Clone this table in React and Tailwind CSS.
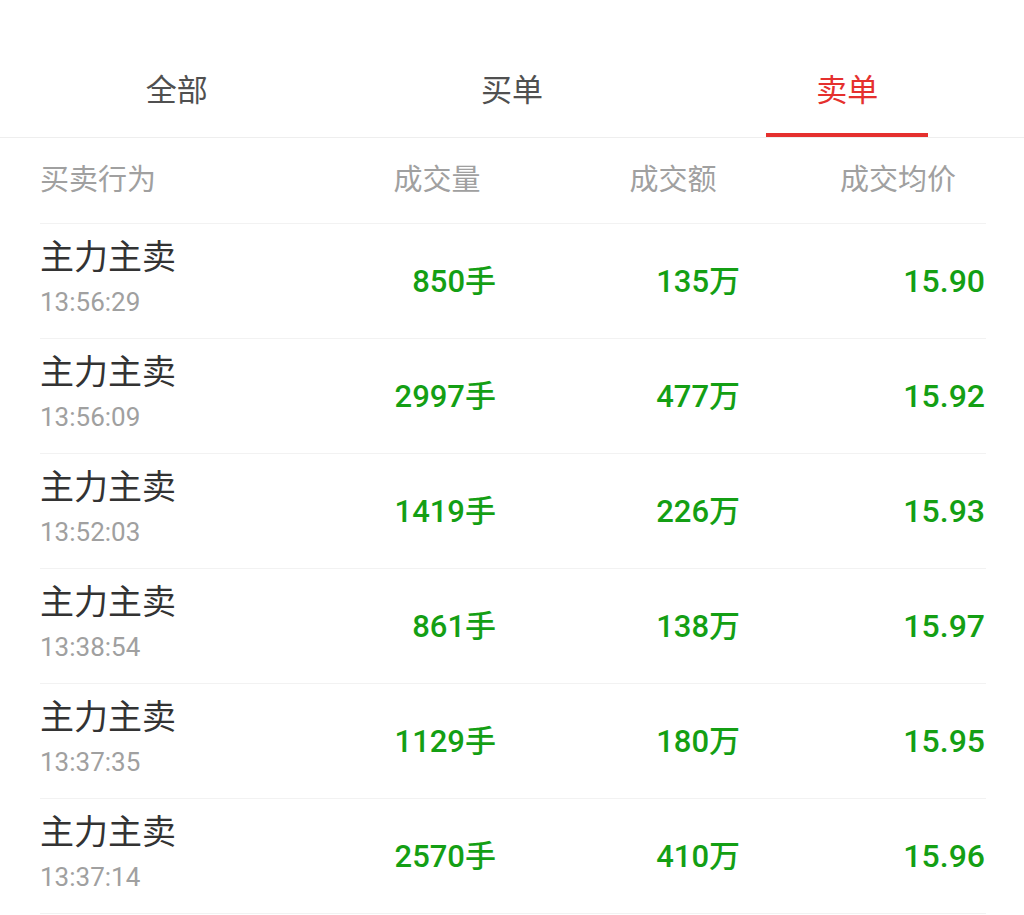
import React from "react";

const rows = [
  { t: "13:56:29", v: "850手", a: "135万", p: "15.90" },
  { t: "13:56:09", v: "2997手", a: "477万", p: "15.92" },
  { t: "13:52:03", v: "1419手", a: "226万", p: "15.93" },
  { t: "13:38:54", v: "861手", a: "138万", p: "15.97" },
  { t: "13:37:35", v: "1129手", a: "180万", p: "15.95" },
  { t: "13:37:14", v: "2570手", a: "410万", p: "15.96" },
];

const font = { fontFamily: 'Roboto, "Noto Sans CJK SC", sans-serif' };

export default function App() {
  return (
    <div className="w-[1024px] h-[915px] bg-white overflow-hidden" style={font}>
      <div className="grid grid-cols-3 px-[9px] border-b border-[#eeeeee]">
        {["全部", "买单", "卖单"].map((t, i) => (
          <div key={t} className="flex flex-col items-center pt-[75px]">
            <div
              className={
                "text-[31px] leading-[31px] " +
                (i === 2 ? "text-[#e5302e]" : "text-[#505050]")
              }
            >
              {t}
            </div>
            <div
              className={
                "mt-[27px] h-[4px] w-[162px] " + (i === 2 ? "bg-[#e5302e]" : "bg-transparent")
              }
            />
          </div>
        ))}
      </div>
      <div className="mx-[40px] w-[946px]">
        <div className="flex border-b border-[#f2f2f2] pt-[28px] pb-[28px] text-[29px] leading-[29px] text-[#a0a0a0]">
          <div className="w-[338px]">买卖行为</div>
          <div className="w-[118px] text-center">成交量</div>
          <div className="w-[134px] ml-[110px] text-center">成交额</div>
          <div className="w-[174px] ml-[71px] text-center">成交均价</div>
        </div>
        {rows.map((r, i) => (
          <div key={i} className="flex h-[115px] border-b border-[#f2f2f2]">
            <div className="w-[338px] pt-[16px]">
              <div className="text-[34px] leading-[34px] text-[#333333]">主力主卖</div>
              <div className="mt-[15px] text-[26px] leading-[26px] text-[#a0a0a0]">{r.t}</div>
            </div>
            <div className="w-[118px] flex items-center justify-end text-[31px] leading-[31px] font-medium text-[#149f14]">
              {r.v}
            </div>
            <div className="w-[134px] ml-[110px] flex items-center justify-end text-[31px] leading-[31px] font-medium text-[#149f14]">
              {r.a}
            </div>
            <div className="w-[174px] ml-[71px] flex items-center justify-end text-[32px] leading-[32px] font-medium text-[#149f14]">
              {r.p}
            </div>
          </div>
        ))}
      </div>
    </div>
  );
}
